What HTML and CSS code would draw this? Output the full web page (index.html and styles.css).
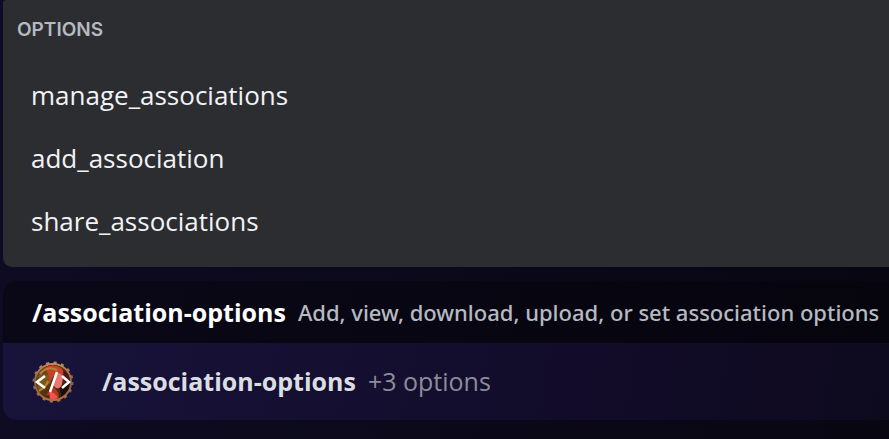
FILE: index.html
```html
<!DOCTYPE html>
<html lang="en">
<head>
<meta charset="utf-8">
<meta name="viewport" content="width=device-width, initial-scale=1">
<title>Command options</title>
<link rel="stylesheet" href="styles.css">
</head>
<body>
<main class="composer">
  <section class="options" aria-labelledby="options-title">
    <h2 class="options-title" id="options-title">OPTIONS</h2>
    <ul class="option-list">
      <li><button class="option" type="button">manage_associations</button></li>
      <li><button class="option" type="button">add_association</button></li>
      <li><button class="option" type="button">share_associations</button></li>
    </ul>
  </section>
  <section class="command">
    <div class="command-info">
      <strong class="command-name">/association-options</strong>
      <span class="command-description">Add, view, download, upload, or set association options</span>
    </div>
    <div class="command-input">
      <svg class="avatar" viewBox="0 0 42 42" aria-hidden="true">
        <defs>
          <clipPath id="disc"><circle cx="21" cy="21" r="17"/></clipPath>
          <linearGradient id="hair" x1="0" y1="0" x2="1" y2="1">
            <stop offset="0" stop-color="#8a5a22"/>
            <stop offset=".4" stop-color="#5c3c12"/>
            <stop offset="1" stop-color="#2a1109"/>
          </linearGradient>
          <linearGradient id="rim" x1="0" y1="0" x2="0" y2="1">
            <stop offset="0" stop-color="#c4895a"/>
            <stop offset=".5" stop-color="#80604c"/>
            <stop offset="1" stop-color="#b07040"/>
          </linearGradient>
          <filter id="soft"><feGaussianBlur stdDeviation=".7"/></filter>
        </defs>
        <circle cx="21" cy="21" r="18" fill="#3c1c14" stroke="url(#rim)" stroke-width="2"/>
        <circle cx="21" cy="21" r="19" fill="none" stroke="url(#rim)" stroke-width="3" stroke-dasharray="3 4.46"/>
        <g clip-path="url(#disc)">
          <g filter="url(#soft)">
            <path fill="url(#hair)" d="M0 0h42v42H0z"/>
            <path fill="#c4432b" d="M13 7c7-5 17-2 20 5l-5 3c-5-3-8 1-10 7l-5 4c4-6 4-13 0-19z"/>
            <path fill="#7e5418" d="M7 14c8-3 12 1 10 7-2 5-6 9-12 9z"/>
            <path fill="#1c0b0a" d="M27 25l8-3 4-6v19l-11 5c2-5 1-10-1-15z"/>
            <path fill="#4d1714" d="M31 8c6 5 8 10 7 17l-6-4z"/>
            <path fill="#ea7771" d="M23 13c4-2 8 0 8 4l-1 5c0 4-3 6-6 5l-3-3z"/>
            <path fill="#b83224" d="M19 20c-1 5 7 8 8 14l-2 7h-5c1-5-4-8-7-7 5-3 7-8 6-14z"/>
            <path fill="#ef554e" d="M17 31c6 0 9 4 9 9H14c4-2 5-5 3-9z"/>
            <path fill="none" stroke="#b68334" stroke-width="2" d="M8 13c5-6 11-7 17-4M7 30c5-3 8-6 9-10"/>
          </g>
        </g>
        <g fill="none" stroke="#fff" stroke-width="2.5">
          <path d="M13 15l-8 6 8 6M30 15l7 6-7 6M25 11l-7 20"/>
        </g>
      </svg>
      <strong class="command-token">/association-options</strong>
      <span class="option-count">+3 options</span>
    </div>
  </section>
</main>
</body>
</html>
```
FILE: styles.css
```css
* {
  box-sizing: border-box;
}

body {
  margin: 0;
  min-height: 100vh;
  background: linear-gradient(100deg, #0f0b24 0%, #0b091a 50%, #080611 100%);
  color: #f2f3f5;
  font-family: "Open Sans", "Noto Sans", sans-serif;
  font-size: 25px;
  line-height: 35px;
  overflow-x: hidden;
}

.composer {
  padding-left: 3px;
}

.options {
  padding: 14px;
  background: #2c2d31;
  border-radius: 3px 0 0 9px;
}

.options-title {
  margin: 0;
  color: #b5bac1;
  font-family: Inter, sans-serif;
  font-size: 19px;
  font-weight: 600;
  line-height: 32px;
}

.option-list {
  margin: 18px 0 0;
  padding: 0;
  list-style: none;
}

.option {
  display: block;
  width: 100%;
  padding: 14px;
  border: 0;
  background: none;
  color: inherit;
  font: inherit;
  font-size: 26px;
  text-align: left;
}

.command {
  margin-top: 14px;
  border-radius: 14px 0 0 14px;
  overflow: hidden;
}

.command-info,
.command-input {
  display: flex;
  align-items: center;
  padding-left: 29px;
  gap: 12px;
  white-space: nowrap;
}

.command-info {
  min-height: 62px;
  background: linear-gradient(100deg, #0a0817, #06040d);
}

.command-input {
  min-height: 77px;
  background: linear-gradient(100deg, #18133a 0%, #120c2a 65%, #0e0a1e 100%);
}

.command-name,
.command-token {
  font-weight: 700;
}

.command-name {
  color: #fff;
}

.command-token {
  color: #dbdee1;
}

.command-description {
  color: #b5bac1;
  font-family: "Noto Sans", "Open Sans", sans-serif;
  font-size: 22px;
  font-weight: 500;
}

.avatar {
  flex: none;
  width: 42px;
  height: 42px;
  margin-right: 16px;
}

.option-count {
  color: #8b8d98;
}
```
